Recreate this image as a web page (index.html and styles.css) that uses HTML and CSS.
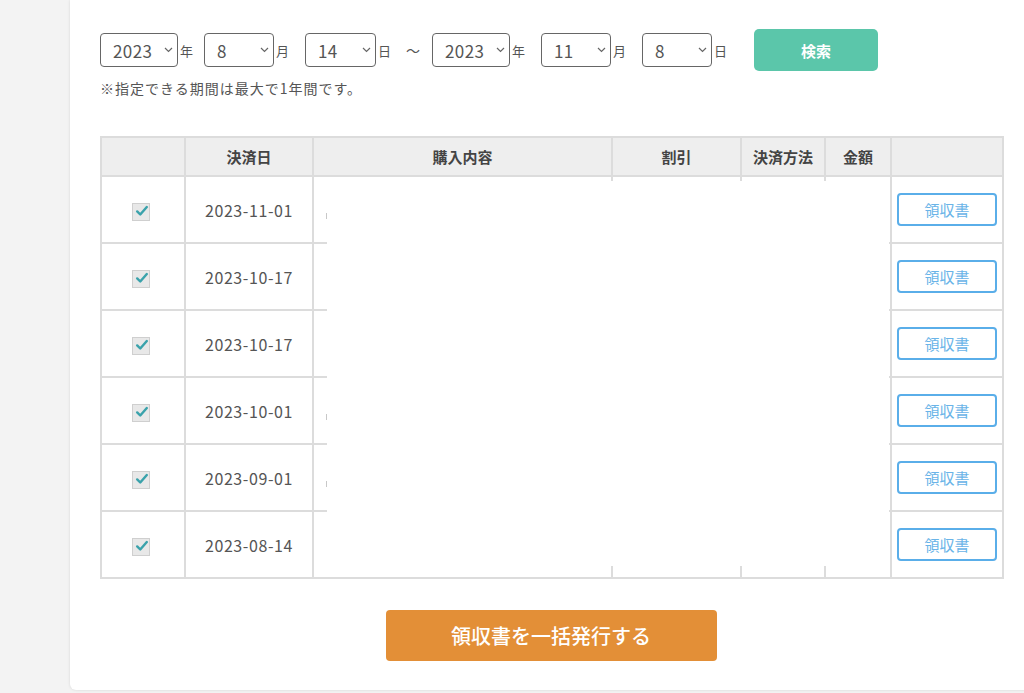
FILE: index.html
```html
<!DOCTYPE html>
<html lang="ja">
<head>
<meta charset="utf-8">
<title>領収書</title>
<link rel="stylesheet" href="styles.css">
</head>
<body>
<div class="page">
  <div class="card">
    <div class="date-row">
      <div class="sel w78"><span>2023</span><svg class="chev" width="9" height="6" viewBox="0 0 9 6"><path d="M1 1l3.5 3.5L8 1" fill="none" stroke="#666" stroke-width="1.2"/></svg></div>
      <span class="unit m10">年</span>
      <div class="sel w70"><span>8</span><svg class="chev" width="9" height="6" viewBox="0 0 9 6"><path d="M1 1l3.5 3.5L8 1" fill="none" stroke="#666" stroke-width="1.2"/></svg></div>
      <span class="unit m15">月</span>
      <div class="sel w71"><span>14</span><svg class="chev" width="9" height="6" viewBox="0 0 9 6"><path d="M1 1l3.5 3.5L8 1" fill="none" stroke="#666" stroke-width="1.2"/></svg></div>
      <span class="unit m14">日</span>
      <span class="tilde">〜</span>
      <div class="sel w78"><span>2023</span><svg class="chev" width="9" height="6" viewBox="0 0 9 6"><path d="M1 1l3.5 3.5L8 1" fill="none" stroke="#666" stroke-width="1.2"/></svg></div>
      <span class="unit m15">年</span>
      <div class="sel w70"><span>11</span><svg class="chev" width="9" height="6" viewBox="0 0 9 6"><path d="M1 1l3.5 3.5L8 1" fill="none" stroke="#666" stroke-width="1.2"/></svg></div>
      <span class="unit m15">月</span>
      <div class="sel w70"><span>8</span><svg class="chev" width="9" height="6" viewBox="0 0 9 6"><path d="M1 1l3.5 3.5L8 1" fill="none" stroke="#666" stroke-width="1.2"/></svg></div>
      <span class="unit m26">日</span>
      <button class="search">検索</button>
    </div>
    <p class="note">※指定できる期間は最大で1年間です。</p>

    <div class="table-wrap">
      <table class="list">
        <colgroup>
          <col class="c1"><col class="c2"><col class="c3"><col class="c4"><col class="c5"><col class="c6"><col class="c7">
        </colgroup>
        <thead>
          <tr><th></th><th>決済日</th><th>購入内容</th><th>割引</th><th>決済方法</th><th>金額</th><th></th></tr>
        </thead>
        <tbody>
          <tr><td class="chk"><span class="box"><svg width="16" height="14" viewBox="0 0 16 14"><path d="M2.5 7.5l3.5 3.5L13.5 2.5" fill="none" stroke="#3aa2ab" stroke-width="2.8" stroke-linecap="round" stroke-linejoin="round"/></svg></span></td><td class="date">2023-11-01</td><td class="item"><span class="frag"></span></td><td></td><td></td><td></td><td class="rc"><button class="receipt">領収書</button></td></tr>
          <tr><td class="chk"><span class="box"><svg width="16" height="14" viewBox="0 0 16 14"><path d="M2.5 7.5l3.5 3.5L13.5 2.5" fill="none" stroke="#3aa2ab" stroke-width="2.8" stroke-linecap="round" stroke-linejoin="round"/></svg></span></td><td class="date">2023-10-17</td><td class="item"></td><td></td><td></td><td></td><td class="rc"><button class="receipt">領収書</button></td></tr>
          <tr><td class="chk"><span class="box"><svg width="16" height="14" viewBox="0 0 16 14"><path d="M2.5 7.5l3.5 3.5L13.5 2.5" fill="none" stroke="#3aa2ab" stroke-width="2.8" stroke-linecap="round" stroke-linejoin="round"/></svg></span></td><td class="date">2023-10-17</td><td class="item"></td><td></td><td></td><td></td><td class="rc"><button class="receipt">領収書</button></td></tr>
          <tr><td class="chk"><span class="box"><svg width="16" height="14" viewBox="0 0 16 14"><path d="M2.5 7.5l3.5 3.5L13.5 2.5" fill="none" stroke="#3aa2ab" stroke-width="2.8" stroke-linecap="round" stroke-linejoin="round"/></svg></span></td><td class="date">2023-10-01</td><td class="item"><span class="frag"></span></td><td></td><td></td><td></td><td class="rc"><button class="receipt">領収書</button></td></tr>
          <tr><td class="chk"><span class="box"><svg width="16" height="14" viewBox="0 0 16 14"><path d="M2.5 7.5l3.5 3.5L13.5 2.5" fill="none" stroke="#3aa2ab" stroke-width="2.8" stroke-linecap="round" stroke-linejoin="round"/></svg></span></td><td class="date">2023-09-01</td><td class="item"><span class="frag"></span></td><td></td><td></td><td></td><td class="rc"><button class="receipt">領収書</button></td></tr>
          <tr><td class="chk"><span class="box"><svg width="16" height="14" viewBox="0 0 16 14"><path d="M2.5 7.5l3.5 3.5L13.5 2.5" fill="none" stroke="#3aa2ab" stroke-width="2.8" stroke-linecap="round" stroke-linejoin="round"/></svg></span></td><td class="date">2023-08-14</td><td class="item"></td><td></td><td></td><td></td><td class="rc"><button class="receipt">領収書</button></td></tr>
        </tbody>
      </table>
      <div class="mask"></div>
    </div>

    <div class="actions">
      <button class="bulk">領収書を一括発行する</button>
    </div>
  </div>
</div>
</body>
</html>
```
FILE: styles.css
```css
html, body {
  margin: 0;
  padding: 0;
  background: #f3f3f3;
  font-family: "Noto Sans CJK JP", "Noto Sans", sans-serif;
  color: #555;
}
.page {
  padding-left: 70px;
  height: 693px;
  overflow: hidden;
}
.card {
  background: #fff;
  border-radius: 0 0 0 6px;
  box-shadow: 0 0 3px rgba(0,0,0,0.12);
  padding: 29px 0 29px 30px;
  width: 1000px;
  box-sizing: border-box;
}
.date-row {
  display: flex;
  align-items: center;
  height: 42px;
}
.sel {
  box-sizing: border-box;
  height: 34px;
  border: 1px solid #666;
  border-radius: 4px;
  display: flex;
  align-items: center;
  justify-content: space-between;
  padding: 0 4px 0 12px;
  font-size: 17px;
  letter-spacing: 0.4px;
  color: #555;
  background: #fff;
}
.sel span { line-height: 1; }
.w78 { width: 78px; }
.w70 { width: 70px; }
.w71 { width: 71px; }
.unit {
  font-size: 13px;
  width: 14px;
  margin-left: 2px;
  color: #555;
}
.m10 { margin-right: 10px; }
.m14 { margin-right: 14px; }
.m15 { margin-right: 15px; }
.m26 { margin-right: 26px; }
.tilde {
  font-size: 14px;
  width: 14px;
  margin-right: 12px;
  color: #555;
}
.search {
  width: 124px;
  height: 42px;
  border: none;
  border-radius: 5px;
  background: #5bc6aa;
  color: #fff;
  font-family: inherit;
  font-size: 15px;
  font-weight: bold;
}
.note {
  margin: 8px 0 0;
  font-size: 14px;
  letter-spacing: 1px;
  line-height: 19px;
  color: #555;
}
.table-wrap {
  position: relative;
  margin-top: 38px;
  width: 902px;
}
.list {
  border-collapse: collapse;
  width: 902px;
  table-layout: fixed;
}
.c1 { width: 84px; }
.c2 { width: 128px; }
.c3 { width: 299px; }
.c4 { width: 129px; }
.c5 { width: 84px; }
.c6 { width: 66px; }
.c7 { width: 112px; }
.list th, .list td {
  border: 2px solid #dcdcdc;
  padding: 0;
  text-align: center;
}
.list th {
  background: #eeeeee;
  height: 37px;
  font-size: 15px;
  font-weight: bold;
  color: #444;
}
.list td {
  height: 65px;
  font-size: 16px;
  letter-spacing: 0.6px;
  color: #555;
}
.box {
  display: inline-flex;
  width: 18px;
  height: 18px;
  box-sizing: border-box;
  background: #e8e8e8;
  border: 1px solid #cfcfcf;
  align-items: center;
  justify-content: center;
  vertical-align: middle;
  margin-left: -4px;
}
.box svg { margin-top: -2px; margin-left: 2px; }
.list td.item {
  text-align: left;
  padding-left: 12px;
}
.frag {
  display: inline-block;
  width: 2px;
  height: 6px;
  background: #c8c8c8;
  margin-top: 18px;
}
.receipt {
  width: 100px;
  height: 33px;
  background: #fff;
  border: 2px solid #5aaee9;
  border-radius: 4px;
  color: #6ab4e8;
  font-family: inherit;
  font-size: 15px;
  letter-spacing: 0;
}
.mask {
  position: absolute;
  left: 227px;
  top: 45px;
  width: 562px;
  height: 385px;
  background: #fff;
}
.actions {
  display: flex;
  justify-content: center;
  width: 902px;
  margin-top: 31px;
}
.bulk {
  width: 331px;
  height: 51px;
  border: none;
  border-radius: 4px;
  background: #e38f37;
  color: #fff;
  font-family: inherit;
  font-size: 20px;
  font-weight: 500;
}
```
